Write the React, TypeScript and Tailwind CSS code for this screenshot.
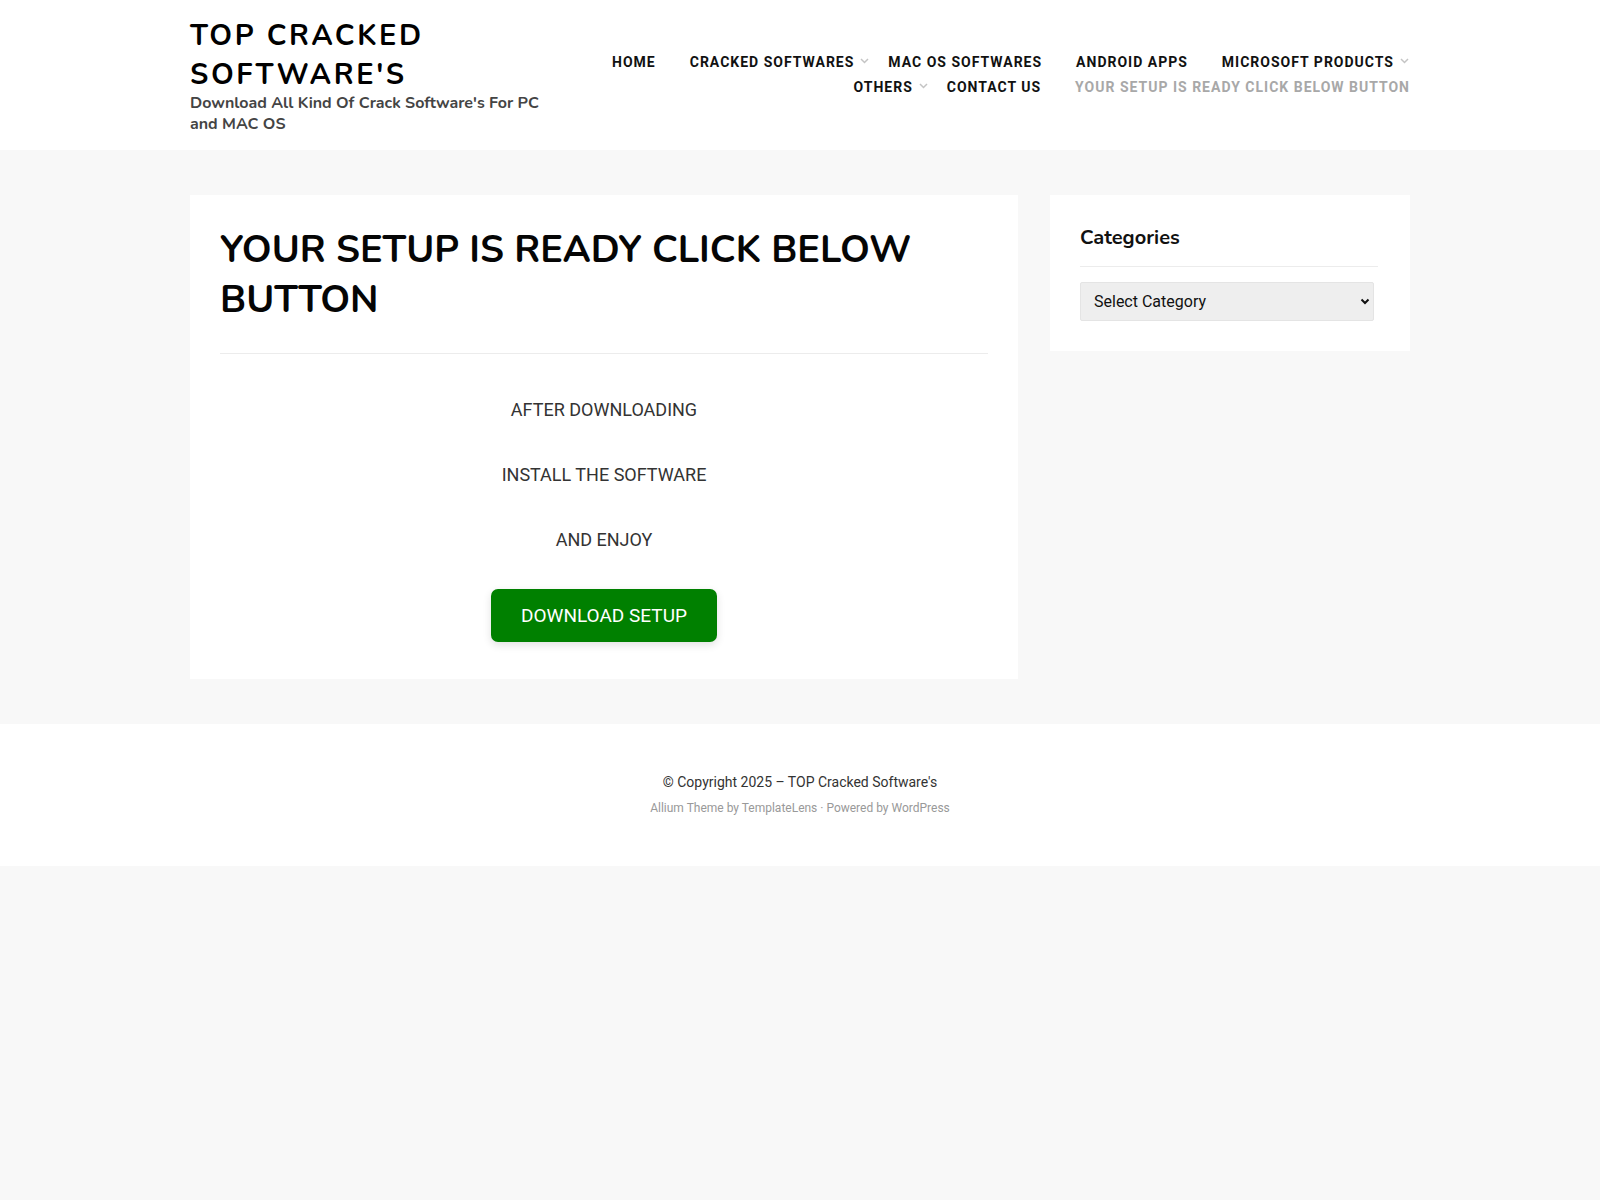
const navRows = [
  [
    { label: 'HOME' },
    { label: 'CRACKED SOFTWARES', dropdown: true },
    { label: 'MAC OS SOFTWARES' },
    { label: 'ANDROID APPS' },
    { label: 'MICROSOFT PRODUCTS', dropdown: true },
  ],
  [
    { label: 'OTHERS', dropdown: true },
    { label: 'CONTACT US' },
    { label: 'YOUR SETUP IS READY CLICK BELOW BUTTON', current: true },
  ],
];

const Chevron = () => (
  <svg width="9" height="6" viewBox="0 0 9 6" className="mb-[3px] ml-[6px]">
    <polyline
      points="1,1 4.5,4.5 8,1"
      fill="none"
      stroke="#c4c4c4"
      strokeWidth="1.5"
    />
  </svg>
);

const NavItem = ({
  label,
  dropdown,
  current,
  last,
}: {
  label: string;
  dropdown?: boolean;
  current?: boolean;
  last?: boolean;
}) => (
  <li className="ml-[18px] flex items-center first:ml-0">
    <a
      href="#"
      className={
        current
          ? 'text-[14px] font-bold tracking-[1px] text-[#a8a8a8]'
          : 'text-[14px] font-bold tracking-[1px] text-[#111]'
      }
    >
      {label}
    </a>
    {!last && <span className="flex w-[16px] items-center">{dropdown && <Chevron />}</span>}
  </li>
);

const Header = () => (
  <header className="bg-white">
    <div className="mx-auto flex h-[150px] w-[1220px] items-start justify-between pt-[16px]">
      <div className="w-[360px]">
        <h1 className="font-['Nunito','Lato',sans-serif] text-[29px] font-bold leading-[39px] tracking-[2.6px] text-black">
          TOP CRACKED SOFTWARE'S
        </h1>
        <p className="-mt-[1px] font-['Nunito','Lato',sans-serif] text-[16px] font-bold leading-[21px] text-[#444]">
          Download All Kind Of Crack Software's For PC and MAC OS
        </p>
      </div>
      <nav className="mt-[34px] font-['Roboto',sans-serif]">
        {navRows.map((row, r) => (
          <ul key={r} className="flex h-[25px] justify-end">
            {row.map((item, i) => (
              <NavItem
                key={item.label}
                {...item}
                last={r === 1 && i === row.length - 1}
              />
            ))}
          </ul>
        ))}
      </nav>
    </div>
  </header>
);

const steps = ['AFTER DOWNLOADING', 'INSTALL THE SOFTWARE', 'AND ENJOY'];

const MainCard = () => (
  <article className="w-[828px] bg-white px-[30px] pt-[30px] pb-[37px]">
    <h2 className="font-['Nunito','Lato',sans-serif] text-[38px] font-bold leading-[50px] text-[#050505]">
      YOUR SETUP IS READY CLICK BELOW BUTTON
    </h2>
    <div className="mt-[28px] h-px bg-[#ececec]" />
    <div className="flex flex-col items-center pt-[42px] font-['Roboto',sans-serif] text-[18px] leading-[28px] text-[#333]">
      {steps.map((s) => (
        <p key={s} className="mb-[37px]">
          {s}
        </p>
      ))}
      <a
        href="#"
        className="-mt-[2px] flex h-[53px] w-[226px] items-center justify-center rounded-[7px] bg-[#008000] text-[19px] text-white shadow-[0_3px_8px_rgba(0,0,0,0.12)]"
      >
        DOWNLOAD SETUP
      </a>
    </div>
  </article>
);

const Sidebar = () => (
  <aside className="h-[156px] w-[360px] bg-white px-[30px] pt-[28px]">
    <h3 className="font-['Nunito','Lato',sans-serif] text-[20px] font-bold leading-[30px] text-[#111]">
      Categories
    </h3>
    <div className="mt-[13px] mr-[2px] h-px bg-[#ececec]" />
    <div className="relative mt-[15px] w-[294px]">
      <select className="h-[39px] w-full appearance-none rounded-[2px] border border-[#e4e4e4] bg-[#eeeeee] pl-[13px] font-['Roboto',sans-serif] text-[16px] text-[#111] outline-none">
        <option>Select Category</option>
      </select>
      <svg
        width="10"
        height="7"
        viewBox="0 0 10 7"
        className="pointer-events-none absolute top-[16px] right-[4px]"
      >
        <polyline
          points="1.5,1.5 5,5 8.5,1.5"
          fill="none"
          stroke="#111"
          strokeWidth="2"
        />
      </svg>
    </div>
  </aside>
);

const Footer = () => (
  <footer className="bg-white">
    <div className="flex h-[142px] flex-col items-center pt-[48px] font-['Roboto',sans-serif]">
      <p className="text-[14px] leading-[20px] text-[#333]">
        © Copyright 2025 – TOP Cracked Software's
      </p>
      <p className="mt-[7px] text-[12px] leading-[18px] text-[#999]">
        Allium Theme by TemplateLens · Powered by WordPress
      </p>
    </div>
  </footer>
);

export default function App() {
  return (
    <div className="min-h-[1200px] bg-[#f8f8f8]">
      <Header />
      <main className="mx-auto flex w-[1220px] items-start justify-between pt-[45px] pb-[45px]">
        <MainCard />
        <Sidebar />
      </main>
      <Footer />
    </div>
  );
}
